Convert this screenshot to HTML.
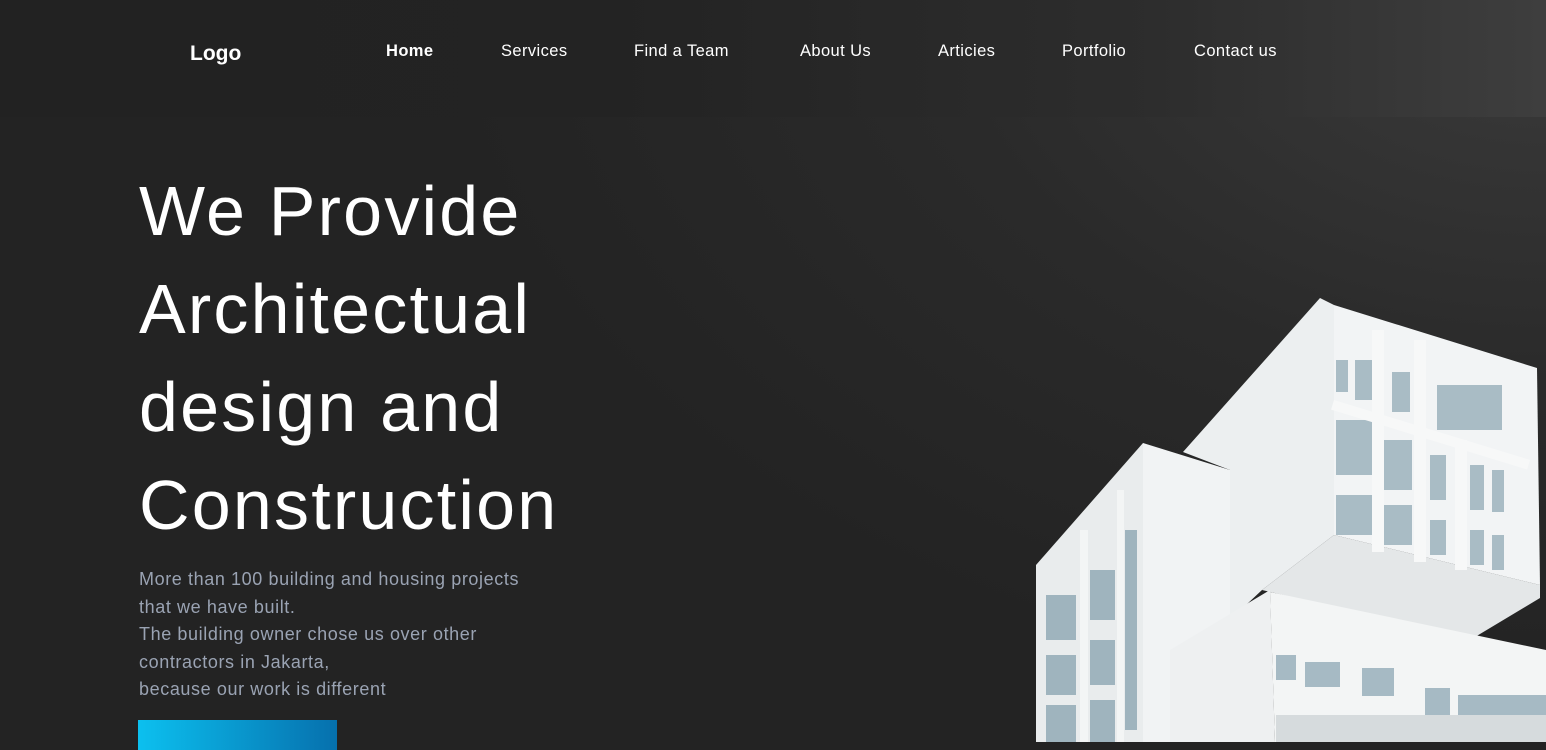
<!DOCTYPE html>
<html><head><meta charset="utf-8"><style>
*{margin:0;padding:0;box-sizing:border-box}
body{width:1546px;height:742px;overflow:hidden;font-family:"Liberation Sans",sans-serif;background:#232323;position:relative}
.bg{position:absolute;inset:0;background:radial-gradient(ellipse 1100px 700px at 1546px 0px,#3b3b3b 0%,#2a2a2a 55%,#232323 100%)}
header{position:absolute;left:0;top:0;width:1546px;height:117px;background:linear-gradient(90deg,#222 0%,#232323 40%,#2d2d2d 75%,#3e3e3e 100%)}
.logo{position:absolute;left:190px;top:42px;color:#fff;font-weight:bold;font-size:21px}
nav a{position:absolute;top:42px;color:#fff;font-size:16.5px;letter-spacing:0.4px;text-decoration:none;white-space:nowrap}
h1{position:absolute;left:139px;top:162px;color:#fff;font-weight:normal;font-size:70px;line-height:98px;letter-spacing:2.2px;white-space:nowrap}
p{position:absolute;left:139px;top:566px;color:#9aa3b3;font-size:18px;line-height:27.5px;letter-spacing:0.6px;white-space:nowrap}
.btn{position:absolute;left:138px;top:720px;width:199px;height:30px;background:linear-gradient(90deg,#0cc0ef,#0670ad)}
svg{position:absolute;left:0;top:0}
</style></head><body>
<div class="bg"></div>
<header>
<div class="logo">Logo</div>
<nav>
<a style="left:386px;font-weight:bold">Home</a>
<a style="left:501px">Services</a>
<a style="left:634px">Find a Team</a>
<a style="left:800px">About Us</a>
<a style="left:938px">Articies</a>
<a style="left:1062px">Portfolio</a>
<a style="left:1194px">Contact us</a>
</nav>
</header>
<h1>We Provide<br>Architectual<br>design and<br>Construction</h1>
<p>More than 100 building and housing projects<br>that we have built.<br>The building owner chose us over other<br>contractors in Jakarta,<br>because our work is different</p>
<div class="btn"></div>
<svg width="1546" height="742" viewBox="0 0 1546 742">
<polygon points="1320,298 1334,305 1334,535 1262,590 1230,620 1230,470 1183,452" fill="#eceff0"/>
<polygon points="1334,535 1540,585 1540,598 1470,640 1262,590" fill="#e4e7e8"/>
<polygon points="1334,305 1537,368 1540,585 1334,535" fill="#f2f4f5"/>
<g fill="#a9bcc5">
<rect x="1336" y="360" width="12" height="32"/><rect x="1355" y="360" width="24" height="40"/>
<rect x="1392" y="372" width="18" height="40"/><rect x="1437" y="385" width="65" height="45"/>
<rect x="1336" y="420" width="36" height="55"/><rect x="1384" y="440" width="28" height="50"/>
<rect x="1430" y="455" width="16" height="45"/><rect x="1470" y="465" width="14" height="45"/>
<rect x="1492" y="470" width="12" height="42"/>
<rect x="1336" y="495" width="36" height="40"/><rect x="1384" y="505" width="28" height="40"/>
<rect x="1430" y="520" width="16" height="35"/><rect x="1470" y="530" width="14" height="35"/><rect x="1492" y="535" width="12" height="35"/>
</g>
<g fill="#f7f8f8"><rect x="1372" y="330" width="12" height="222"/><rect x="1414" y="340" width="12" height="222"/><rect x="1455" y="440" width="12" height="130"/><rect x="1334" y="400" width="205" height="10" transform="rotate(17 1334 400)"/></g>
<polygon points="1143,443 1036,565 1036,742 1143,742" fill="#e9eced"/>
<g fill="#9fb4be">
<rect x="1046" y="595" width="30" height="45"/><rect x="1090" y="570" width="25" height="50"/>
<rect x="1046" y="655" width="30" height="40"/><rect x="1090" y="640" width="25" height="45"/>
<rect x="1046" y="705" width="30" height="37"/><rect x="1090" y="700" width="25" height="42"/>
<rect x="1125" y="530" width="12" height="200"/>
</g>
<g fill="#f3f5f5"><rect x="1080" y="530" width="8" height="212"/><rect x="1117" y="490" width="7" height="252"/></g>
<polygon points="1143,443 1230,470 1230,742 1143,742" fill="#f1f3f4"/>
<polygon points="1170,650 1270,590 1275,742 1170,742" fill="#eef0f1"/>
<polygon points="1270,592 1546,650 1546,742 1275,742" fill="#f3f5f5"/>
<g fill="#a6bac4">
<rect x="1276" y="655" width="20" height="25"/><rect x="1305" y="662" width="35" height="25"/>
<rect x="1362" y="668" width="32" height="28"/><rect x="1425" y="688" width="25" height="30"/>
<rect x="1458" y="695" width="88" height="35"/>
</g>
<g fill="#d6dbdd"><rect x="1276" y="715" width="270" height="27"/></g>
</svg>
</body></html>
